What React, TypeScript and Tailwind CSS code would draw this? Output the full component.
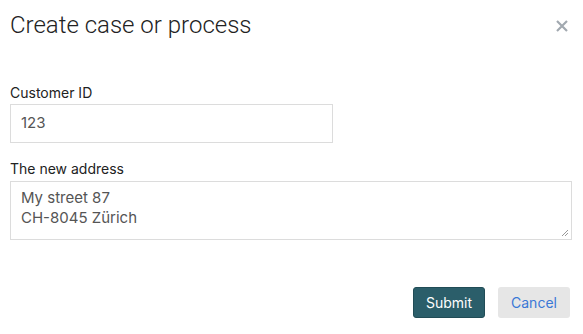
export default function App() {
  return (
    <div className="h-[334px] w-[583px] bg-white font-['Inter',sans-serif] text-[#222]">
      <div className="flex items-start justify-between pl-[10px] pr-[15px] pt-[10px]">
        <h1 className="font-['Roboto',sans-serif] text-[24px] font-light leading-[30px] text-[#222]">
          Create case or process
        </h1>
        <button className="mt-[10px] text-[#a2a9b0]" aria-label="Close">
          <svg width="12" height="12" viewBox="0 0 12 12" fill="none" stroke="currentColor" strokeWidth="2.2">
            <path d="M1 1L11 11M11 1L1 11" />
          </svg>
        </button>
      </div>

      <form className="px-[10px] pr-[11px] pt-[43px]">
        <label className="mb-[1px] block text-[14px] leading-5 text-[#222]">Customer ID</label>
        <div className="flex h-[39px] w-[323px] items-center border border-[#dcdcdc] px-[10px] text-[15px] text-[#555]">
          123
        </div>

        <label className="mb-[2px] mt-[16px] block text-[14px] leading-5 text-[#222]">The new address</label>
        <div className="relative h-[59px] w-full border border-[#dcdcdc] px-[10px] pt-[6px] text-[15px] leading-5 text-[#555]">
          <div>My street 87</div>
          <div>CH-8045 Zürich</div>
          <svg className="absolute bottom-[2px] right-[2px]" width="8" height="8" viewBox="0 0 8 8" stroke="#999" strokeWidth="1">
            <path d="M7 1L1 7M7 4L4 7" />
          </svg>
        </div>

        <div className="mt-[47px] flex justify-end gap-[13px] pr-[2px]">
          <button
            type="button"
            className="h-[31px] w-[72px] rounded-[3px] border border-[#214c56] bg-[#2b5e6a] text-[14px] text-white"
          >
            Submit
          </button>
          <button
            type="button"
            className="h-[31px] w-[72px] rounded-[3px] bg-[#e6e6e6] text-[14px] text-[#3a78d6]"
          >
            Cancel
          </button>
        </div>
      </form>
    </div>
  );
}
